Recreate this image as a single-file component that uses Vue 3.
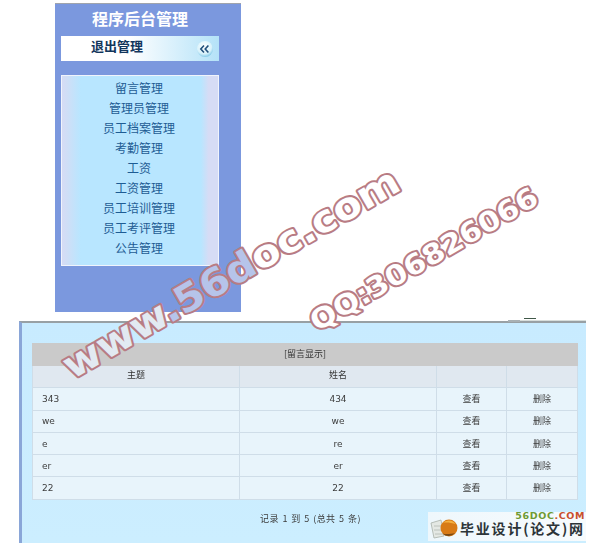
<script setup>
const menu = ['留言管理', '管理员管理', '员工档案管理', '考勤管理', '工资', '工资管理', '员工培训管理', '员工考评管理', '公告管理']
const rows = [
  ['343', '434'],
  ['we', 'we'],
  ['e', 're'],
  ['er', 'er'],
  ['22', '22'],
]
</script>

<template>
  <div class="page">
    <aside class="side">
      <h1 class="title">程序后台管理</h1>
      <div class="exit">
        <span class="exit-text">退出管理</span>
        <svg class="exit-icon" width="18" height="18" viewBox="0 0 18 18">
          <defs>
            <radialGradient id="orb" cx="45%" cy="35%" r="70%">
              <stop offset="0" stop-color="#ffffff" />
              <stop offset="0.65" stop-color="#d8f2fb" />
              <stop offset="1" stop-color="#6fc0e4" />
            </radialGradient>
          </defs>
          <circle cx="9" cy="9" r="8" fill="url(#orb)" />
          <path d="M8 5.5 4.8 9 8 12.5M12.4 5.5 9.2 9l3.2 3.5" fill="none" stroke="#20507c" stroke-width="1.6" />
        </svg>
      </div>
      <ul class="menu">
        <li v-for="m in menu" :key="m">{{ m }}</li>
      </ul>
    </aside>

    <section class="panel">
      <table class="grid">
        <colgroup>
          <col class="c1" /><col class="c2" /><col class="c3" /><col class="c4" />
        </colgroup>
        <thead>
          <tr><th colspan="4" class="cap">[留言显示]</th></tr>
          <tr class="head"><th>主题</th><th>姓名</th><th></th><th></th></tr>
        </thead>
        <tbody>
          <tr v-for="r in rows" :key="r[0]">
            <td class="first">{{ r[0] }}</td>
            <td class="mid">{{ r[1] }}</td>
            <td class="mid">查看</td>
            <td class="mid">删除</td>
          </tr>
        </tbody>
      </table>
      <p class="foot">记录 1 到 5 (总共 5 条)</p>
    </section>

    <i class="chip chip-a"></i>
    <i class="chip chip-b"></i>
    <i class="chip chip-c"></i>

    <div class="logo">
      <svg class="fish" width="36" height="28" viewBox="0 0 36 28">
        <path d="M2 10 12 7l3 16-10 2z" fill="#e4e8e4" stroke="#a8b0a8" stroke-width="0.8" />
        <path d="M5 13h7M5 17h8M6 21h8" stroke="#b0b8b0" stroke-width="0.8" />
        <circle cx="20" cy="15" r="8.5" fill="#d87a16" />
        <path d="M13.5 10a8.5 8.5 0 0 1 13 1c-4-1-9-2-13-1z" fill="#f4b040" />
        <path d="M13.5 20.5a8.5 8.5 0 0 0 12.5-.5c-4 1-9 1.500-12.500.5z" fill="#7a4a14" />
      </svg>
      <span class="brand"><b class="g">56DOC</b><b class="r">.COM</b></span>
      <span class="logo-name">毕业设计(论文)网</span>
    </div>

    <svg class="mark" width="594" height="543" viewBox="0 0 594 543">
      <text x="72" y="380" transform="rotate(-30 72 380)" textLength="382" lengthAdjust="spacingAndGlyphs" class="wm wm-a"><tspan fill="#e2eaf2">www</tspan><tspan fill="#b6c4ea">.56d</tspan><tspan fill="#ffffff">oc.com</tspan></text>
      <text x="317" y="332" transform="rotate(-30 317 332)" textLength="258" lengthAdjust="spacingAndGlyphs" class="wm wm-b">QQ:306826066</text>
    </svg>
  </div>
</template>

<style>
html, body { margin: 0; background: #fff; }
</style>

<style scoped>
.page {
  position: relative;
  width: 594px;
  height: 543px;
  overflow: hidden;
  background: #fff;
  font-family: "Noto Sans CJK SC", "Liberation Sans", sans-serif;
}
.side {
  box-sizing: border-box;
  width: 186px;
  height: 309px;
  margin: 3px 0 0 55px;
  padding: 0 22px 0 6px;
  background: #7b98de;
  border-top: 1px solid #a0a4ac;
}
.title {
  margin: 0;
  height: 32px;
  font-size: 16px;
  line-height: 29px;
  font-weight: 700;
  color: #fff;
  text-align: center;
}
.exit {
  display: flex;
  align-items: center;
  justify-content: space-between;
  height: 25px;
  padding: 0 5px 0 30px;
  background: linear-gradient(90deg, #fff 0, #fff 42%, #b4e2f8 100%);
}
.exit-text {
  font-size: 13px;
  font-weight: 700;
  line-height: 20px;
  height: 20px;
  align-self: flex-start;
  color: #12365c;
}
.exit-icon { display: block; }
.menu {
  box-sizing: border-box;
  height: 191px;
  margin: 14px 0 0;
  padding: 2px 0 0;
  list-style: none;
  border: 1px solid #f0f4fc;
  background: linear-gradient(90deg, #d6dcf5 0, #d0def6 3%, #b8e6ff 12%, #b8e6ff 89%, #d6dcf5 94%, #d6dcf5 100%);
}
.menu li {
  height: 20px;
  padding-right: 2px;
  line-height: 20px;
  font-size: 12px;
  text-align: center;
  color: #1e5c94;
}
.panel {
  box-sizing: border-box;
  width: 567px;
  height: 222px;
  margin: 9px 0 0 19px;
  padding: 20px 9px 0 10px;
  background: linear-gradient(#c8ebff, #cceeff);
  border-top: 2px solid #98a0a4;
  border-left: 3px solid #8aa6d8;
}
.grid {
  width: 545px;
  table-layout: fixed;
  border-collapse: collapse;
  font-size: 9px;
  color: #3c3c3c;
  filter: blur(0.3px);
}
.c1 { width: 207px; }
.c2 { width: 197px; }
.c3 { width: 70px; }
.c4 { width: 71px; }
.grid th, .grid td {
  height: 22.3px;
  padding: 0;
  box-sizing: border-box;
  border: 1px solid #cfdde8;
  font-weight: 400;
  line-height: 12px;
}
.grid .cap {
  height: 22px;
  padding-bottom: 2px;
  background: #cacaca;
  border-color: #cacaca;
  color: #333;
}
.head th {
  padding-bottom: 4px;
  background: #e0e8f0;
  color: #333;
}
.grid td { background: #e8f4fb; }
.grid .first {
  padding-left: 9px;
  font-family: "DejaVu Sans", "Noto Sans CJK SC", sans-serif;
}
.grid .mid {
  text-align: center;
  font-family: "DejaVu Sans", "Noto Sans CJK SC", sans-serif;
}
.foot {
  margin: 13px 0 0;
  padding-left: 12px;
  font-size: 9px;
  line-height: 12px;
  letter-spacing: 0.45px;
  word-spacing: 1px;
  text-align: center;
  color: #3c3c3c;
  filter: blur(0.3px);
}
.chip { position: absolute; display: block; }
.chip-a { left: 508px; top: 320px; width: 12px; height: 2px; background: #a8b0b4; }
.chip-b { left: 524px; top: 318px; width: 12px; height: 1px; background: #405848; }
.chip-c { left: 520px; top: 320px; width: 66px; height: 1px; background: #d8dedc; }
.logo {
  position: absolute;
  left: 428px;
  top: 512px;
  width: 158px;
  height: 29px;
  background: linear-gradient(90deg, #eef7fc, #f7fbfd);
}
.fish { position: absolute; left: 1px; top: 1px; }
.brand {
  position: absolute;
  right: 1px;
  top: 0;
  display: flex;
  height: 8px;
  font-family: "DejaVu Sans", sans-serif;
  font-size: 9.5px;
  line-height: 8px;
  letter-spacing: 0.6px;
}
.g { display: block; height: 8px; color: #6e9a34; }
.r { display: block; height: 8px; color: #c8502c; }
.logo-name {
  position: absolute;
  left: 32px;
  top: 9px;
  font-size: 14px;
  line-height: 14px;
  font-weight: 700;
  letter-spacing: 1.8px;
  color: #2c3438;
  white-space: nowrap;
}
.mark { position: absolute; left: 0; top: 0; pointer-events: none; }
.wm {
  font-family: "DejaVu Sans", sans-serif;
  font-weight: 700;
  stroke: #b87c84;
  paint-order: stroke;
  stroke-linejoin: round;
}
.wm-a { font-size: 38px; stroke-width: 4px; }
.wm-b { font-size: 28px; stroke-width: 4px; fill: #fff; }
</style>
